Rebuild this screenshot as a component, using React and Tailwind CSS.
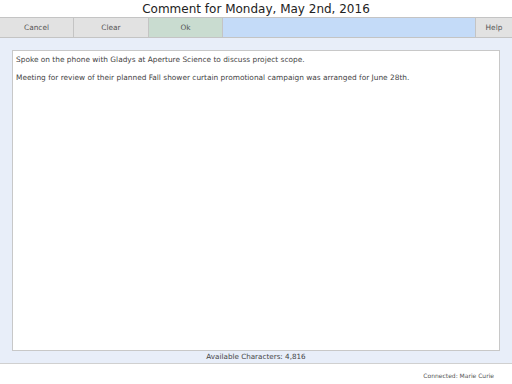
export default function App() {
  return (
    <div className="flex h-[384px] w-[512px] flex-col bg-white font-['DejaVu_Sans',sans-serif] text-[#444]">
      <div className="flex h-[17px] items-center justify-center text-[12px] leading-none text-[#222]">
        Comment for Monday, May 2nd, 2016
      </div>

      <div className="flex h-[21px] border-y border-[#c4c4c4] text-[7.4px] text-[#555]">
        <div className="flex w-[74px] items-center justify-center border-r border-[#c4c4c4] bg-[#e2e2e2]">Cancel</div>
        <div className="flex w-[75px] items-center justify-center border-r border-[#c4c4c4] bg-[#e2e2e2]">Clear</div>
        <div className="flex w-[74px] items-center justify-center border-r border-[#c4c4c4] bg-[#c9dcd0]">Ok</div>
        <div className="flex-1 border-r border-[#c4c4c4] bg-[#c4dbf8]" />
        <div className="flex w-[36px] items-center justify-center bg-[#e2e2e2]">Help</div>
      </div>

      <div className="flex h-[326px] flex-col border-b border-[#d0d0d0] bg-[#e8eef9] px-[12px] pt-[12px]">
        <div className="flex-1 border border-[#c8c8c8] bg-white px-[3px] pt-[3px] text-[7.4px] leading-[11px] text-[#444]">
          <p>Spoke on the phone with Gladys at Aperture Science to discuss project scope.</p>
          <p className="mt-[7px]">Meeting for review of their planned Fall shower curtain promotional campaign was arranged for June 28th.</p>
        </div>
        <div className="flex h-[12px] items-center justify-center text-[7.2px] text-[#444]">Available Characters: 4,816</div>
      </div>

      <div className="flex flex-1 items-center justify-end pr-[18px] pt-[2px] text-[6px] text-[#555]">Connected: Marie Curie</div>
    </div>
  );
}
